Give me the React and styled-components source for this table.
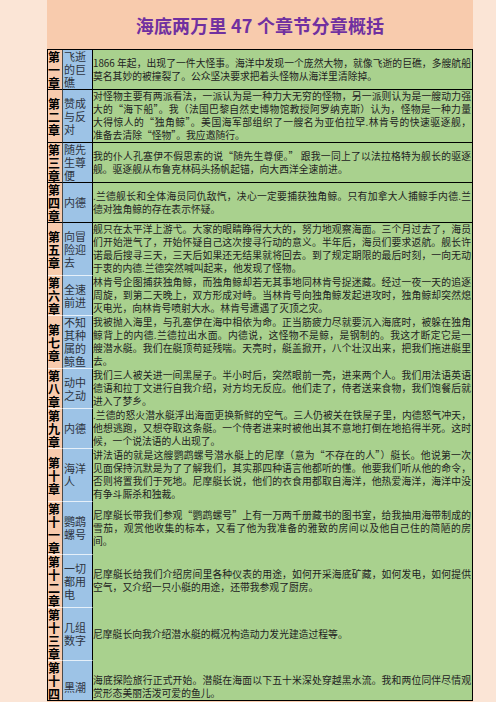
import React from "react";
import styled, { createGlobalStyle } from "styled-components";

const GlobalStyle = createGlobalStyle`
  html, body {
    margin: 0;
    padding: 0;
    background: #fbe5d6;
  }
  body {
    font-family: "Noto Sans CJK SC", "Noto Sans", sans-serif;
  }
`;

const Page = styled.div`
  padding-left: 47px;
`;

const Panel = styled.div`
  width: 426px;
  min-height: 702px;
  background: #f8cbad;
`;

const Title = styled.h1`
  margin: 0;
  height: 49px;
  display: flex;
  align-items: center;
  justify-content: center;
  font-family: "Noto Sans CJK SC", sans-serif;
  font-size: 18px;
  font-weight: 700;
  color: #7030a0;
  letter-spacing: 0.2px;
`;

const Table = styled.div`
  height: 652px;
  box-sizing: border-box;
  border: 1px solid #000;
  overflow: hidden;
`;

const Row = styled.div`
  display: grid;
  grid-template-columns: 15px 30px 1fr;
  height: ${(p) => (p.$h ? `${p.$h}px` : "auto")};
`;

const lineColor = (p, col) => {
  if (p.$last) return "transparent";
  if (p.$dark) return "#000";
  if (col === 3) return "transparent";
  return "rgba(255,255,255,0.75)";
};

const ChapterCell = styled.div`
  background: #f8cbad;
  border-right: 1px solid #4a4a4a;
  border-bottom: 1px solid ${(p) => lineColor(p, 1)};
  display: flex;
  flex-direction: column;
  font-size: 12px;
  font-weight: 700;
  line-height: 13px;
  color: #000;
  word-break: break-all;
`;

const ChapterText = styled.span`
  margin: auto 0;
`;

const NameCell = styled.div`
  background: #9dc3e6;
  border-right: 1px solid #000;
  border-bottom: 1px solid ${(p) => lineColor(p, 2)};
  display: flex;
  align-items: center;
  padding-left: 1px;
  font-size: 11px;
  line-height: 13px;
  color: #2e3440;
  word-break: break-all;
`;

const TextCell = styled.div`
  background: #a9d18e;
  border-bottom: 1px solid ${(p) => lineColor(p, 3)};
  display: flex;
  flex-direction: column;
  justify-content: center;
  padding: 0 1px 0 0;
  font-size: 9.8px;
  line-height: 13px;
  color: #222;
`;

const Line = styled.span`
  display: block;
  text-align: justify;
  text-align-last: justify;
  &:last-child {
    text-align-last: auto;
  }
`;

const chapters = [
  {
    no: "第一章",
    name: "飞逝的巨礁",
    lines: [
      "1866 年起，出现了一件大怪事。海洋中发现一个庞然大物，就像飞逝的巨礁，多艘航船",
      "莫名其妙的被撞裂了。公众坚决要求把着头怪物从海洋里清除掉。",
    ],
  },
  {
    no: "第二章",
    name: "赞成与反对",
    lines: [
      "对怪物主要有两派看法，一派认为是一种力大无穷的怪物，另一派则认为是一艘动力强",
      "大的“海下船”。我（法国巴黎自然史博物馆教授阿罗纳克斯）认为，怪物是一种力量",
      "大得惊人的“独角鲸”。美国海军部组织了一艘名为亚伯拉罕.林肯号的快速驱逐舰，",
      "准备去清除“怪物”。我应邀随行。",
    ],
  },
  {
    no: "第三章",
    name: "随先生尊便",
    lines: [
      "我的仆人孔塞伊不假思索的说“随先生尊便。” 跟我一同上了以法拉格特为舰长的驱逐",
      "舰。驱逐舰从布鲁克林码头扬帆起锚，向大西洋全速前进。",
    ],
  },
  {
    no: "第四章",
    name: "内德",
    lines: [
      ".兰德舰长和全体海员同仇敌忾，决心一定要捕获独角鲸。只有加拿大人捕鲸手内德.兰",
      "德对独角鲸的存在表示怀疑。",
    ],
  },
  {
    no: "第五章",
    name: "向冒险迎去",
    lines: [
      "舰只在太平洋上游弋。大家的眼睛睁得大大的，努力地观察海面。三个月过去了，海员",
      "们开始泄气了，开始怀疑自己这次搜寻行动的意义。半年后，海员们要求返航。舰长许",
      "诺最后搜寻三天，三天后如果还无结果就将回去。到了规定期限的最后时刻，一向无动",
      "于衷的内德.兰德突然喊叫起来，他发现了怪物。",
    ],
  },
  {
    no: "第六章",
    name: "全速前进",
    lines: [
      "林肯号企图捕获独角鲸，而独角鲸却若无其事地同林肯号捉迷藏。经过一夜一天的追逐",
      "周旋，到第二天晚上，双方形成对峙。当林肯号向独角鲸发起进攻时，独角鲸却突然熄",
      "灭电光，向林肯号喷射大水。林肯号遭遇了灭顶之灾。",
    ],
  },
  {
    no: "第七章",
    name: "不知其种属的鲸鱼",
    lines: [
      "我被抛入海里，与孔塞伊在海中相依为命。正当筋疲力尽就要沉入海底时，被躲在独角",
      "鲸背上的内德.兰德拉出水面。内德说，这怪物不是鲸，是钢制的。我这才断定它是一",
      "艘潜水艇。我们在艇顶苟延残喘。天亮时，艇盖掀开，八个壮汉出来，把我们拖进艇里",
      "去。",
    ],
  },
  {
    no: "第八章",
    name: "动中之动",
    lines: [
      "我们三人被关进一间黑屋子。半小时后，突然眼前一亮，进来两个人。我们用法语英语",
      "德语和拉丁文进行自我介绍，对方均无反应。他们走了，侍者送来食物，我们饱餐后就",
      "进入了梦乡。",
    ],
  },
  {
    no: "第九章",
    name: "内德",
    lines: [
      ".兰德的怒火潜水艇浮出海面更换新鲜的空气。三人仍被关在铁屋子里，内德怒气冲天，",
      "他想逃跑，又想夺取这条艇。一个侍者进来时被他出其不意地打倒在地掐得半死。这时",
      "候，一个说法语的人出现了。",
    ],
  },
  {
    no: "第十章",
    name: "海洋人",
    lines: [
      "讲法语的就是这艘鹦鹉螺号潜水艇上的尼摩（意为“不存在的人”）艇长。他说第一次",
      "见面保持沉默是为了了解我们，其实那四种语言他都听的懂。他要我们听从他的命令，",
      "否则将置我们于死地。尼摩艇长说，他们的衣食用都取自海洋，他热爱海洋，海洋中没",
      "有争斗厮杀和独裁。",
    ],
  },
  {
    no: "第十一章",
    name: "鹦鹉螺号",
    lines: [
      "尼摩艇长带我们参观“鹦鹉螺号”上有一万两千册藏书的图书室，给我抽用海带制成的",
      "雪茄，观赏他收集的标本，又看了他为我准备的雅致的房间以及他自己住的简陋的房间。",
    ],
  },
  {
    no: "第十二章",
    name: "一切都用电",
    lines: [
      "尼摩艇长给我们介绍房间里各种仪表的用途，如何开采海底矿藏，如何发电，如何提供",
      "空气，又介绍一只小艇的用途，还带我参观了厨房。",
    ],
  },
  {
    no: "第十三章",
    name: "几组数字",
    lines: ["尼摩艇长向我介绍潜水艇的概况构造动力发光建造过程等。"],
  },
  {
    no: "第十四章",
    name: "黑潮",
    lines: [
      "海底探险旅行正式开始。潜艇在海面以下五十米深处穿越黑水流。我和两位同伴尽情观",
      "赏形态美丽活泼可爱的鱼儿。",
    ],
  },
];

export default function App() {
  return (
    <>
      <GlobalStyle />
      <Page>
        <Panel>
          <Title>海底两万里 47 个章节分章概括</Title>
          <Table>
            {chapters.map((c, i) => {
              const last = i === chapters.length - 1;
              const dark = i < 4;
              return (
                <Row key={c.no} $h={last ? 39 : undefined}>
                  <ChapterCell $dark={dark} $last={last}>
                    <ChapterText>{c.no}</ChapterText>
                  </ChapterCell>
                  <NameCell $dark={dark} $last={last}>
                    {c.name}
                  </NameCell>
                  <TextCell $dark={dark} $last={last}>
                    {c.lines.map((l, j) => (
                      <Line key={j}>{l}</Line>
                    ))}
                  </TextCell>
                </Row>
              );
            })}
          </Table>
        </Panel>
      </Page>
    </>
  );
}
